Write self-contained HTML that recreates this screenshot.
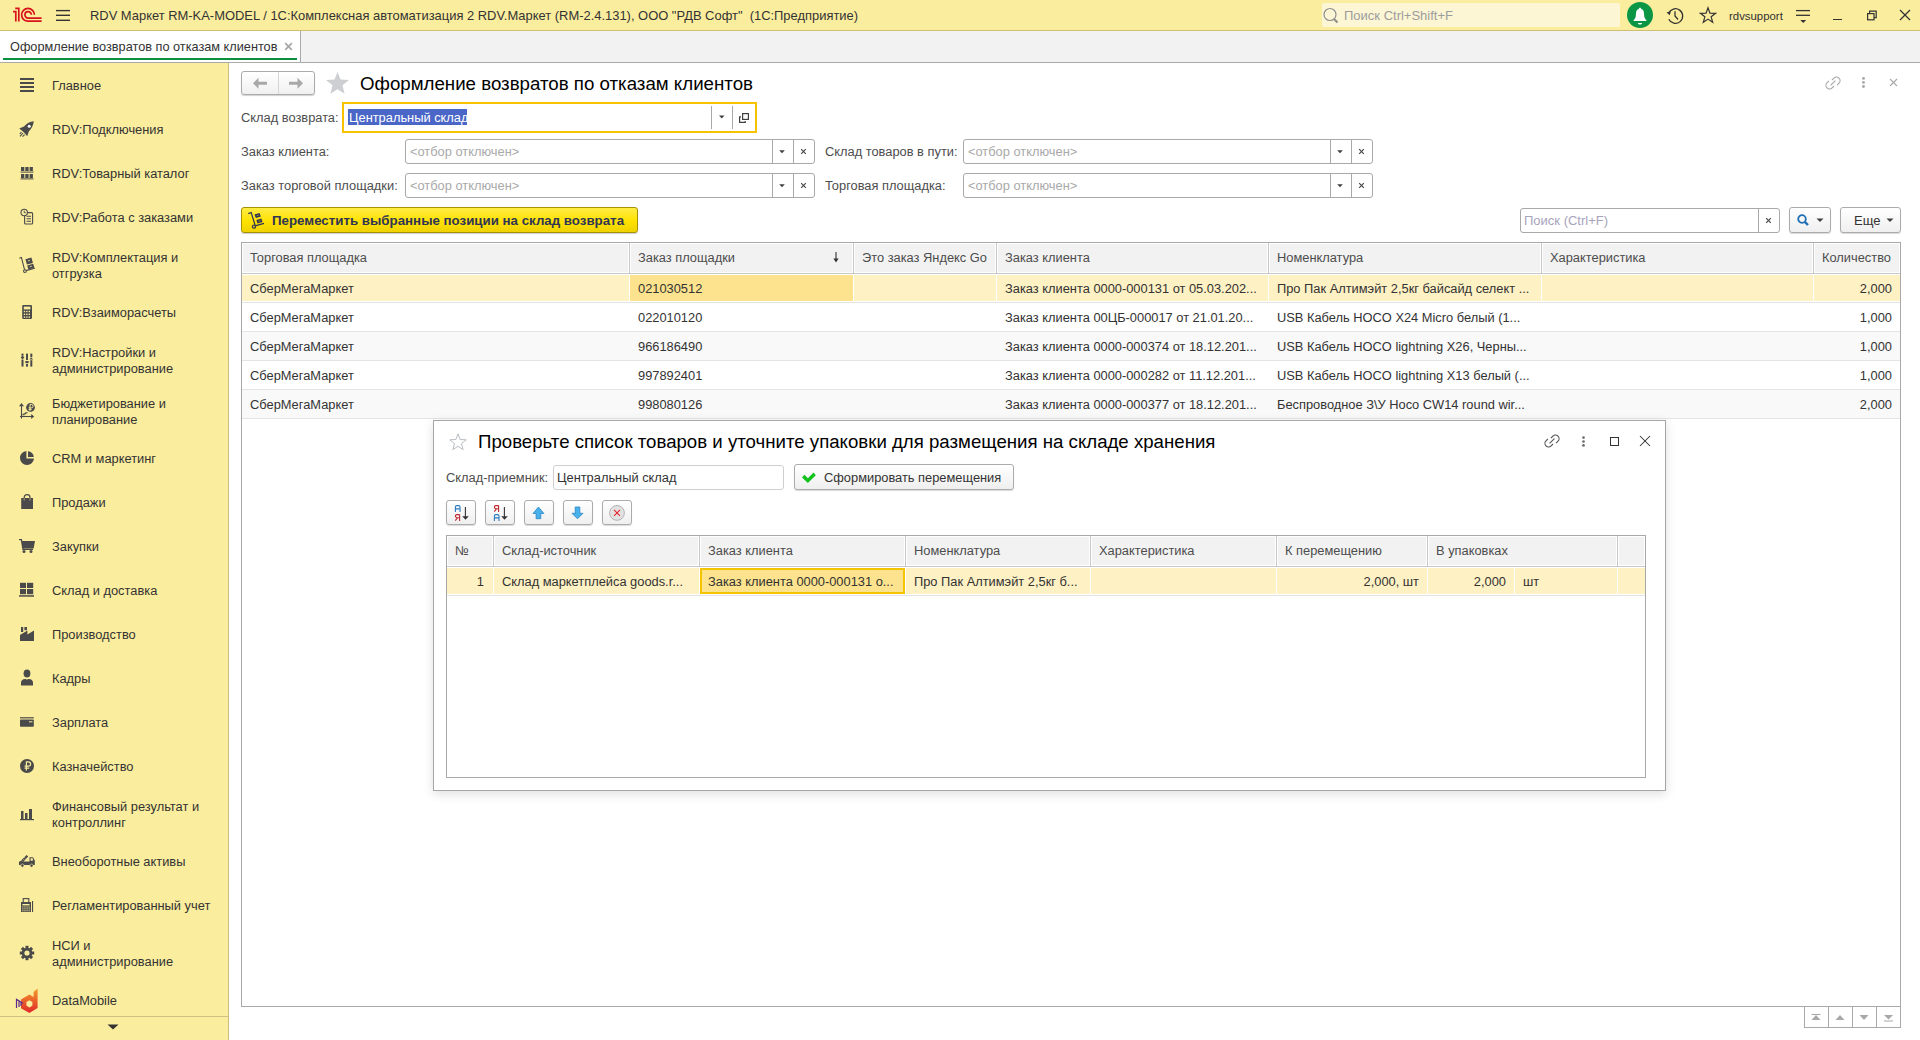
<!DOCTYPE html>
<html><head><meta charset="utf-8"><style>
html,body{margin:0;padding:0;width:1920px;height:1040px;overflow:hidden;background:#fff;position:relative}
.b{position:absolute;display:block}
.t{position:absolute;white-space:nowrap;line-height:16px;font-family:"Liberation Sans",sans-serif}
</style></head><body>
<div class="b" style="left:0px;top:0px;width:1920px;height:30px;background:#FBED9E"></div>
<div class="b" style="left:0px;top:30px;width:1920px;height:1px;background:#CFBF72"></div>
<svg class="b" style="left:8px;top:4px;" width="40" height="22" viewBox="0 0 40 22"><g fill="none" stroke="#D8121B" stroke-width="1.7"><path d="M7.2,4.4 H10.8 V17.6"/><path d="M5,7.6 H7.8 V17.6"/><path d="M26.4,10.8 A6.4,6.4 0 1 0 20,17.2 H33.6"/><path d="M23.4,10.85 A3.25,3.25 0 1 0 20.15,14.1 H33.6"/></g></svg>
<svg class="b" style="left:54px;top:6px;" width="18" height="18" viewBox="0 0 18 18"><g stroke="#333" stroke-width="1.4"><path d="M2,4.6 H16"/><path d="M2,9.3 H16"/><path d="M2,14.3 H16"/></g></svg>
<div class="t " style="left:90px;top:7.92px;font-size:12.93px;letter-spacing:0.00px;color:#333;font-weight:normal;">RDV Маркет RM-KA-MODEL / 1С:Комплексная автоматизация 2 RDV.Маркет (RM-2.4.131), ООО "РДВ Софт"&nbsp; (1С:Предприятие)</div>
<div class="b" style="left:1322px;top:3px;width:298px;height:24px;background:#FDF6D5;border-radius:2px"></div>
<svg class="b" style="left:1322px;top:6px;" width="18" height="18" viewBox="0 0 18 18"><g fill="none" stroke="#8F8F8F" stroke-width="1.2"><circle cx="8" cy="8.5" r="6"/></g><path d="M12,13 L15.5,16.5" stroke="#8F8F8F" stroke-width="2.2"/></svg>
<div class="t " style="left:1344px;top:7.90px;font-size:13px;letter-spacing:0.00px;color:#9C9C9C;font-weight:normal;">Поиск Ctrl+Shift+F</div>
<svg class="b" style="left:1627px;top:2px;" width="26" height="26" viewBox="0 0 26 26"><circle cx="13" cy="13" r="13" fill="#0B9646"/><path d="M13,5.8 c0.8,0 1,0.5 1,1 c2.2,0.6 2.9,2.6 3,4.6 l0.3,3.4 c0.3,1.4 1.5,2.6 2.3,4.2 H6.4 c0.8,-1.6 2,-2.8 2.3,-4.2 l0.3,-3.4 c0.1,-2 0.8,-4 3,-4.6 c0,-0.5 0.2,-1 1,-1z" fill="#fff"/><path d="M10.8,21 H15.2 c-0.4,1 -1.2,1.6 -2.2,1.6 c-1,0 -1.8,-0.6 -2.2,-1.6z" fill="#fff"/></svg>
<svg class="b" style="left:1664px;top:5px;" width="22" height="20" viewBox="0 0 22 20"><g fill="none" stroke="#333" stroke-width="1.3"><path d="M4.6,8.3 A7.3,7.3 0 1 1 4.8,14.2"/><path d="M11,6.3 V11 L14,14.5"/></g><path d="M2.5,7.5 L6.8,6.2 L5.8,10.3z" fill="#333"/></svg>
<svg class="b" style="left:1699px;top:6px;" width="18" height="18" viewBox="0 0 18 18"><path d="M9.00,1.80 L10.94,7.13 L16.61,7.33 L12.14,10.82 L13.70,16.27 L9.00,13.10 L4.30,16.27 L5.86,10.82 L1.39,7.33 L7.06,7.13z" fill="none" stroke="#333" stroke-width="1.2" stroke-linejoin="miter"/></svg>
<div class="t " style="left:1729px;top:8.45px;font-size:11.4px;letter-spacing:0.00px;color:#333;font-weight:normal;">rdvsupport</div>
<svg class="b" style="left:1794px;top:6px;" width="18" height="18" viewBox="0 0 18 18"><g stroke="#333" stroke-width="1.3"><path d="M2,4.6 H16"/><path d="M2,9.3 H16"/></g><path d="M6.3,14 H12.2 L9.2,17z" fill="#333"/></svg>
<div class="b" style="left:1833px;top:19px;width:9px;height:1.4px;background:#333"></div>
<svg class="b" style="left:1864px;top:8px;" width="14" height="14" viewBox="0 0 14 14"><g fill="none" stroke="#333" stroke-width="1.2"><rect x="3.6" y="5.6" width="6.4" height="6.2"/><path d="M5.6,5.6 V3.2 H12.2 V9.6 H10"/></g></svg>
<svg class="b" style="left:1898px;top:8px;" width="14" height="14" viewBox="0 0 14 14"><g stroke="#333" stroke-width="1.3"><path d="M2,2 L12,12"/><path d="M12,2 L2,12"/></g></svg>
<div class="b" style="left:0px;top:31px;width:1920px;height:31px;background:#F2F2F2"></div>
<div class="b" style="left:0px;top:31px;width:300px;height:31px;background:#fff"></div>
<div class="b" style="left:300px;top:31px;width:1px;height:31px;background:#A9A9A9"></div>
<div class="b" style="left:3px;top:58px;width:294px;height:2px;background:#0A8F3C"></div>
<div class="b" style="left:0px;top:62px;width:1920px;height:1px;background:#A9A9A9"></div>
<div class="t " style="left:10px;top:38.99px;font-size:12.72px;letter-spacing:0.00px;color:#333;font-weight:normal;">Оформление возвратов по отказам клиентов</div>
<svg class="b" style="left:283px;top:41px;" width="12" height="12" viewBox="0 0 12 12"><g stroke="#A6A6A6" stroke-width="1.7"><path d="M2.2,2.2 L8.8,8.8"/><path d="M8.8,2.2 L2.2,8.8"/></g></svg>
<div class="b" style="left:0px;top:63px;width:228px;height:977px;background:#FBED9E"></div>
<div class="b" style="left:228px;top:63px;width:1px;height:977px;background:#CBBE7C"></div>
<svg class="b" style="left:0;top:0" width="228" height="1040" viewBox="0 0 228 1040"><g fill="#4A4A4A"><rect x="20" y="78" width="14" height="2"/><rect x="20" y="82" width="14" height="2"/><rect x="20" y="86" width="14" height="2"/><rect x="20" y="90" width="14" height="2"/></g><path d="M33.8,121.2 C30,121.6 26.5,123.4 24,126.4 L19.2,128.4 L22.4,131 L24.2,132.8 L27.2,136.2 L28.8,131.4 C31.6,128.8 33.4,125 33.8,121.2Z" fill="#4A4A4A"/><circle cx="29.2" cy="126.3" r="1.5" fill="#fff"/><path d="M23,133 L20,136.3 M24.6,134.6 L22.6,136.6 M21.4,132.2 L19.8,134" stroke="#4A4A4A" stroke-width="1.1"/><g fill="#4A4A4A"><rect x="21" y="167" width="3.3" height="4"/><rect x="25.3" y="167" width="3.3" height="4"/><rect x="29.6" y="167" width="3.3" height="4"/><rect x="20.5" y="171.6" width="13" height="1"/><rect x="21" y="174" width="3.3" height="4"/><rect x="25.3" y="174" width="3.3" height="4"/><rect x="29.6" y="174" width="3.3" height="4"/><rect x="20.5" y="178.4" width="13" height="1"/></g><g fill="none" stroke="#4A4A4A" stroke-width="1.1"><rect x="24.6" y="212.6" width="8" height="11.4" rx="1"/><path d="M26.5,216.3 H31 M26.5,218.7 H31 M26.5,221.2 H31"/></g><circle cx="24.2" cy="212.5" r="3.2" fill="#FBED9E" stroke="#4A4A4A" stroke-width="1.1"/><path d="M24.2,210.6 V212.7 H25.8" fill="none" stroke="#4A4A4A" stroke-width="0.9"/><g fill="none" stroke="#4A4A4A" stroke-width="1.1"><path d="M19.4,258.2 L21.4,257.4 L24.6,269.8"/><path d="M25.8,270.6 L34.8,268.2"/><circle cx="24.9" cy="271.1" r="1.4"/></g><g fill="#4A4A4A"><path d="M25.4,259.2 L31.4,257.6 L32.9,263 L26.9,264.6Z"/><path d="M27.2,265.4 L33.2,263.8 L34.4,268 L28.4,269.6Z"/></g><g stroke="#FBED9E" stroke-width="0.8"><path d="M28,261 L30,260.4"/><path d="M29.8,266.8 L31.8,266.2"/></g><rect x="22.2" y="305" width="9.8" height="14" rx="1.2" fill="#4A4A4A"/><rect x="23.8" y="306.6" width="6.6" height="2.8" fill="#FBED9E"/><g fill="#FBED9E"><rect x="23.8" y="310.8" width="1.4" height="1.4"/><rect x="23.8" y="313.6" width="1.4" height="1.4"/><rect x="23.8" y="316.40000000000003" width="1.4" height="1.4"/><rect x="26.2" y="310.8" width="1.4" height="1.4"/><rect x="26.2" y="313.6" width="1.4" height="1.4"/><rect x="26.2" y="316.40000000000003" width="1.4" height="1.4"/><rect x="28.6" y="310.8" width="1.4" height="1.4"/><rect x="28.6" y="313.6" width="1.4" height="1.4"/><rect x="28.6" y="316.40000000000003" width="1.4" height="1.4"/></g><g fill="#4A4A4A"><rect x="21.5" y="353.6" width="2" height="2.2"/><path d="M22.5,355.6 L24.3,357.6 L22.5,359.6 L20.7,357.6Z"/><rect x="21.5" y="359.6" width="2" height="7"/><rect x="26" y="353.6" width="2" height="6.4"/><rect x="25.4" y="361" width="3.2" height="2.2"/><rect x="26" y="364" width="2" height="2.6"/><rect x="30.3" y="353.6" width="2" height="3.6"/><path d="M31.3,357.6 L33.2,359.4 L29.4,359.4Z"/><rect x="30.3" y="360.2" width="2" height="6.4"/></g><g fill="none" stroke="#4A4A4A" stroke-width="1.1"><path d="M21.5,405 V418.6"/><path d="M20,416.5 H32.4"/><path d="M22.2,414.8 L24,414.8 L24,413.8 L25.6,413.8 L25.6,412.8 L27.6,412.8"/></g><g fill="#4A4A4A"><path d="M21.5,403 L24,406.2 H19Z"/><path d="M34.2,416.5 L31.2,414 V419Z"/><circle cx="30.5" cy="407.5" r="4.4"/></g><path d="M30,411.3 V404.5 H31.4 A1.7,1.7 0 0 1 31.4,407.9 H28.6 M28.6,409.4 H31.6" fill="none" stroke="#FBED9E" stroke-width="1"/><path d="M26.4,451 A7,7 0 1 0 34,458.6 H26.4Z" fill="#4A4A4A"/><path d="M28,451.2 A6.2,6.2 0 0 1 33.8,457 H28Z" fill="#4A4A4A"/><rect x="21.2" y="498" width="11.8" height="11" fill="#4A4A4A"/><path d="M24.2,500.5 V497.5 A2.9,2.9 0 0 1 30,497.5 V500.5" fill="none" stroke="#4A4A4A" stroke-width="1.2"/><path d="M24.2,498.3 V500.5 M30,498.3 V500.5" stroke="#FBED9E" stroke-width="0.6"/><path d="M19,539.6 H21.4 L23,549.4 H33" fill="none" stroke="#4A4A4A" stroke-width="1.3"/><path d="M21.6,541 H35 L33.6,548.6 H22.8Z" fill="#4A4A4A"/><circle cx="24" cy="551.6" r="1.5" fill="#4A4A4A"/><circle cx="31" cy="551.6" r="1.5" fill="#4A4A4A"/><g fill="#4A4A4A"><rect x="20" y="582.8" width="6" height="5.2"/><rect x="27" y="582.8" width="6.2" height="5.2"/><rect x="20" y="589" width="6" height="5.2"/><rect x="27" y="589" width="6.2" height="5.2"/><rect x="19" y="595.2" width="15" height="1.5"/></g><g fill="#4A4A4A"><rect x="21" y="627" width="2.2" height="5"/><rect x="24.4" y="627" width="2.6" height="3.2"/><path d="M20,635 L27.4,630.6 V634.4 L34,630.6 V641 H20Z"/></g><path d="M21,685.6 V682.6 C21,680.4 22.8,679.2 25,679 H29 C31.2,679.2 33,680.4 33,682.6 V685.6Z" fill="#4A4A4A"/><ellipse cx="27" cy="673.6" rx="3.4" ry="4" fill="#4A4A4A"/><path d="M24.8,674 C25,676.6 26,677.6 27,677.6 C28,677.6 29,676.6 29.2,674 C28.4,673.2 27.4,672.2 27,671.8 C26.4,672.6 25.6,673.4 24.8,674Z" fill="#FBED9E" opacity="0.0"/><path d="M25.4,677.4 L27,679.6 L28.6,677.4" fill="none" stroke="#FBED9E" stroke-width="0.8"/><rect x="20" y="717.2" width="13.8" height="1.2" fill="#4A4A4A"/><rect x="20" y="719.4" width="13.8" height="7.4" rx="0.8" fill="#4A4A4A"/><rect x="29" y="721.3" width="3.4" height="1" fill="#FBED9E"/><circle cx="27" cy="766" r="7" fill="#4A4A4A"/><path d="M26.4,770.6 V761.8 H28.4 A2.2,2.2 0 0 1 28.4,766.2 H24.6 M24.6,768.2 H29.2" fill="none" stroke="#FBED9E" stroke-width="1.2"/><g fill="#4A4A4A"><rect x="21" y="811" width="2.5" height="8"/><rect x="25" y="813" width="2.5" height="6"/><rect x="29" y="809" width="3" height="10"/><rect x="20" y="819" width="14" height="1.2"/></g><path d="M19,865 V861.6 L20,861.6 L26.6,855 L28.2,856.6 L23.5,861.6 H29.5 V857.2 H33 L34.8,860.6 V865Z" fill="#4A4A4A"/><rect x="30.6" y="858.2" width="2.2" height="2.6" fill="#FBED9E"/><g stroke="#FBED9E" stroke-width="0.6"><path d="M21.4,860.2 L22.6,861.4 M22.9,858.7 L24.1,859.9 M24.4,857.2 L25.6,858.4"/></g><circle cx="22.4" cy="865.6" r="1.6" fill="#4A4A4A" stroke="#FBED9E" stroke-width="0.6"/><circle cx="31.5" cy="865.6" r="1.6" fill="#4A4A4A" stroke="#FBED9E" stroke-width="0.6"/><rect x="21" y="902" width="10" height="10" fill="#4A4A4A"/><rect x="23.2" y="898.6" width="5.6" height="4" fill="#FBED9E" stroke="#4A4A4A" stroke-width="1.1"/><rect x="32" y="901" width="1.1" height="11" fill="#4A4A4A"/><rect x="22.4" y="904" width="7.2" height="1.4" fill="#FBED9E"/><g fill="#FBED9E"><rect x="22.3" y="906.4" width="1.1" height="1.1"/><rect x="22.3" y="908.3" width="1.1" height="1.1"/><rect x="22.3" y="910.1999999999999" width="1.1" height="1.1"/><rect x="24.400000000000002" y="906.4" width="1.1" height="1.1"/><rect x="24.400000000000002" y="908.3" width="1.1" height="1.1"/><rect x="24.400000000000002" y="910.1999999999999" width="1.1" height="1.1"/><rect x="26.5" y="906.4" width="1.1" height="1.1"/><rect x="26.5" y="908.3" width="1.1" height="1.1"/><rect x="26.5" y="910.1999999999999" width="1.1" height="1.1"/><rect x="28.6" y="906.4" width="1.1" height="1.1"/><rect x="28.6" y="908.3" width="1.1" height="1.1"/><rect x="28.6" y="910.1999999999999" width="1.1" height="1.1"/></g><circle cx="27" cy="953" r="5.3" fill="#4A4A4A"/><rect x="25.5" y="945.8" width="3" height="3" fill="#4A4A4A" transform="rotate(0 27 953)"/><rect x="25.5" y="945.8" width="3" height="3" fill="#4A4A4A" transform="rotate(45 27 953)"/><rect x="25.5" y="945.8" width="3" height="3" fill="#4A4A4A" transform="rotate(90 27 953)"/><rect x="25.5" y="945.8" width="3" height="3" fill="#4A4A4A" transform="rotate(135 27 953)"/><rect x="25.5" y="945.8" width="3" height="3" fill="#4A4A4A" transform="rotate(180 27 953)"/><rect x="25.5" y="945.8" width="3" height="3" fill="#4A4A4A" transform="rotate(225 27 953)"/><rect x="25.5" y="945.8" width="3" height="3" fill="#4A4A4A" transform="rotate(270 27 953)"/><rect x="25.5" y="945.8" width="3" height="3" fill="#4A4A4A" transform="rotate(315 27 953)"/><circle cx="27" cy="953" r="2.6" fill="#FBED9E"/><defs><linearGradient id="dmg" x1="0" y1="0" x2="0" y2="1"><stop offset="0" stop-color="#F39A2A"/><stop offset="1" stop-color="#E0282A"/></linearGradient></defs><path d="M33.6,992 L37.6,988.6 V1008 L29.4,1013 L21,1008.2 V999.4 L29.4,994.6 L33.6,997Z M29.4,1000.2 L26.4,1002 V1005.6 L29.4,1007.4 L32.4,1005.6 V1002Z" fill="url(#dmg)" fill-rule="evenodd"/><path d="M16.5,1008 V999.4 L23,1003.2 M19,1001 V1007 M21,1002.2 V1006" fill="none" stroke="#5E2A8C" stroke-width="1.2"/></svg>
<div class="t " style="left:52px;top:77.95px;font-size:12.85px;letter-spacing:0.00px;color:#333;font-weight:normal;">Главное</div>
<div class="t " style="left:52px;top:121.95px;font-size:12.85px;letter-spacing:0.00px;color:#333;font-weight:normal;">RDV:Подключения</div>
<div class="t " style="left:52px;top:165.95px;font-size:12.85px;letter-spacing:0.00px;color:#333;font-weight:normal;">RDV:Товарный каталог</div>
<div class="t " style="left:52px;top:209.95px;font-size:12.85px;letter-spacing:0.00px;color:#333;font-weight:normal;">RDV:Работа с заказами</div>
<div class="t " style="left:52px;top:249.95px;font-size:12.85px;letter-spacing:0.00px;color:#333;font-weight:normal;">RDV:Комплектация и</div>
<div class="t " style="left:52px;top:265.95px;font-size:12.85px;letter-spacing:0.00px;color:#333;font-weight:normal;">отгрузка</div>
<div class="t " style="left:52px;top:304.95px;font-size:12.85px;letter-spacing:0.00px;color:#333;font-weight:normal;">RDV:Взаиморасчеты</div>
<div class="t " style="left:52px;top:344.95px;font-size:12.85px;letter-spacing:0.00px;color:#333;font-weight:normal;">RDV:Настройки и</div>
<div class="t " style="left:52px;top:360.95px;font-size:12.85px;letter-spacing:0.00px;color:#333;font-weight:normal;">администрирование</div>
<div class="t " style="left:52px;top:395.95px;font-size:12.85px;letter-spacing:0.00px;color:#333;font-weight:normal;">Бюджетирование и</div>
<div class="t " style="left:52px;top:411.95px;font-size:12.85px;letter-spacing:0.00px;color:#333;font-weight:normal;">планирование</div>
<div class="t " style="left:52px;top:450.95px;font-size:12.85px;letter-spacing:0.00px;color:#333;font-weight:normal;">CRM и маркетинг</div>
<div class="t " style="left:52px;top:494.95px;font-size:12.85px;letter-spacing:0.00px;color:#333;font-weight:normal;">Продажи</div>
<div class="t " style="left:52px;top:538.95px;font-size:12.85px;letter-spacing:0.00px;color:#333;font-weight:normal;">Закупки</div>
<div class="t " style="left:52px;top:582.95px;font-size:12.85px;letter-spacing:0.00px;color:#333;font-weight:normal;">Склад и доставка</div>
<div class="t " style="left:52px;top:626.95px;font-size:12.85px;letter-spacing:0.00px;color:#333;font-weight:normal;">Производство</div>
<div class="t " style="left:52px;top:670.95px;font-size:12.85px;letter-spacing:0.00px;color:#333;font-weight:normal;">Кадры</div>
<div class="t " style="left:52px;top:714.95px;font-size:12.85px;letter-spacing:0.00px;color:#333;font-weight:normal;">Зарплата</div>
<div class="t " style="left:52px;top:758.95px;font-size:12.85px;letter-spacing:0.00px;color:#333;font-weight:normal;">Казначейство</div>
<div class="t " style="left:52px;top:798.95px;font-size:12.85px;letter-spacing:0.00px;color:#333;font-weight:normal;">Финансовый результат и</div>
<div class="t " style="left:52px;top:814.95px;font-size:12.85px;letter-spacing:0.00px;color:#333;font-weight:normal;">контроллинг</div>
<div class="t " style="left:52px;top:853.95px;font-size:12.85px;letter-spacing:0.00px;color:#333;font-weight:normal;">Внеоборотные активы</div>
<div class="t " style="left:52px;top:897.95px;font-size:12.85px;letter-spacing:0.00px;color:#333;font-weight:normal;">Регламентированный учет</div>
<div class="t " style="left:52px;top:937.95px;font-size:12.85px;letter-spacing:0.00px;color:#333;font-weight:normal;">НСИ и</div>
<div class="t " style="left:52px;top:953.95px;font-size:12.85px;letter-spacing:0.00px;color:#333;font-weight:normal;">администрирование</div>
<div class="t " style="left:52px;top:992.95px;font-size:12.85px;letter-spacing:0.00px;color:#333;font-weight:normal;">DataMobile</div>
<div class="b" style="left:0px;top:1016px;width:228px;height:24px;background:#FBED9E"></div>
<div class="b" style="left:0px;top:1016px;width:228px;height:1px;background:#CFC183"></div>
<svg class="b" style="left:106px;top:1023px;" width="14" height="8" viewBox="0 0 14 8"><path d="M1.5,1.5 H12.5 L7,6.5z" fill="#333"/></svg>
<div class="b" style="left:229px;top:63px;width:1691px;height:977px;background:#fff"></div>
<div class="b" style="left:241px;top:71px;width:74px;height:24px;border:1px solid #ABABAB;border-radius:3px;background:linear-gradient(#fff,#F0F0F0);box-shadow:0 1px 1px rgba(0,0,0,0.18);box-sizing:border-box"></div>
<div class="b" style="left:278px;top:72px;width:1px;height:22px;background:#D5D5D5"></div>
<svg class="b" style="left:251px;top:75px;" width="18" height="16" viewBox="0 0 18 16"><path d="M2,8.25 L7.5,2.8 V6.8 H16 V9.7 H7.5 V13.7Z" fill="#A8A8A8"/></svg>
<svg class="b" style="left:288px;top:75px;" width="18" height="16" viewBox="0 0 18 16"><path d="M15,8.25 L9.5,2.8 V6.8 H1 V9.7 H9.5 V13.7Z" fill="#A8A8A8"/></svg>
<svg class="b" style="left:325px;top:71px;" width="25" height="24" viewBox="0 0 25 24"><path d="M12.5,1 L15.5,8.6 L24,9 L17.5,14.3 L19.6,22.8 L12.5,18.2 L5.4,22.8 L7.5,14.3 L1,9 L9.5,8.6z" fill="#CDCFD2"/></svg>
<div class="t " style="left:360px;top:75.50px;font-size:18.7px;letter-spacing:0.00px;color:#000;font-weight:normal;">Оформление возвратов по отказам клиентов</div>
<svg class="b" style="left:1824px;top:74px;" width="18" height="18" viewBox="0 0 18 18"><g fill="none" stroke="#A8A8A8" stroke-width="1.15"><path d="M8,6 L9.9,4.1 A3.6,3.6 0 0 1 15,9.2 L13.1,11.1"/><path d="M10,12 L8.1,13.9 A3.6,3.6 0 0 1 3,8.8 L4.9,6.9"/><path d="M6.6,11.4 L11.4,6.6"/></g></svg>
<svg class="b" style="left:1858px;top:74px;" width="12" height="18" viewBox="0 0 12 18"><g fill="#A8A8A8"><circle cx="5.5" cy="4.4" r="1.45"/><circle cx="5.5" cy="8.4" r="1.45"/><circle cx="5.5" cy="12.5" r="1.45"/></g></svg>
<svg class="b" style="left:1886px;top:76px;" width="14" height="14" viewBox="0 0 14 14"><g stroke="#A8A8A8" stroke-width="1.1"><path d="M4,3 L11,10"/><path d="M11,3 L4,10"/></g></svg>
<div class="t " style="left:241px;top:109.95px;font-size:12.85px;letter-spacing:0.00px;color:#4D4D4D;font-weight:normal;">Склад возврата:</div>
<div class="b" style="left:342px;top:102px;width:415px;height:31px;border:2px solid #F7C300;box-sizing:border-box;background:#fff"></div>
<div class="b" style="left:348px;top:109px;width:119px;height:16px;background:#4A66C7"></div>
<div class="t " style="left:349px;top:109.95px;font-size:12.85px;letter-spacing:0.00px;color:#fff;font-weight:normal;">Центральный склад</div>
<div class="b" style="left:711px;top:106px;width:1px;height:23px;background:#A8A8A8"></div>
<div class="b" style="left:732px;top:106px;width:1px;height:23px;background:#A8A8A8"></div>
<svg class="b" style="left:717px;top:113px;" width="10" height="8" viewBox="0 0 10 8"><path d="M2,2.5 H7.5 L4.75,5.5z" fill="#404040"/></svg>
<svg class="b" style="left:737px;top:111px;" width="14" height="14" viewBox="0 0 14 14"><g fill="none" stroke="#404040" stroke-width="1.2"><rect x="5.6" y="2.6" width="5.8" height="5.8"/><path d="M4,5.8 H2.6 V11.4 H8.2 V10"/></g></svg>
<div class="t " style="left:241px;top:143.95px;font-size:12.85px;letter-spacing:0.00px;color:#4D4D4D;font-weight:normal;">Заказ клиента:</div>
<div class="b" style="left:405px;top:139px;width:410px;height:25px;border:1px solid #A9A9A9;border-radius:3px;box-sizing:border-box;background:#fff"></div>
<div class="b" style="left:772px;top:140px;width:1px;height:23px;background:#A9A9A9"></div>
<div class="b" style="left:793px;top:140px;width:1px;height:23px;background:#A9A9A9"></div>
<svg class="b" style="left:777px;top:148px;" width="10" height="8" viewBox="0 0 10 8"><path d="M2.2,2.2 H7.8 L5,5.2z" fill="#404040"/></svg>
<svg class="b" style="left:799px;top:147px;" width="10" height="10" viewBox="0 0 10 10"><g stroke="#454545" stroke-width="1.15"><path d="M2.2,2.2 L6.8,6.8"/><path d="M6.8,2.2 L2.2,6.8"/></g></svg>
<div class="t " style="left:410px;top:143.95px;font-size:12.85px;letter-spacing:0.00px;color:#A9A9A9;font-weight:normal;">&lt;отбор отключен&gt;</div>
<div class="t " style="left:825px;top:143.95px;font-size:12.85px;letter-spacing:0.00px;color:#4D4D4D;font-weight:normal;">Склад товаров в пути:</div>
<div class="b" style="left:963px;top:139px;width:410px;height:25px;border:1px solid #A9A9A9;border-radius:3px;box-sizing:border-box;background:#fff"></div>
<div class="b" style="left:1330px;top:140px;width:1px;height:23px;background:#A9A9A9"></div>
<div class="b" style="left:1351px;top:140px;width:1px;height:23px;background:#A9A9A9"></div>
<svg class="b" style="left:1335px;top:148px;" width="10" height="8" viewBox="0 0 10 8"><path d="M2.2,2.2 H7.8 L5,5.2z" fill="#404040"/></svg>
<svg class="b" style="left:1357px;top:147px;" width="10" height="10" viewBox="0 0 10 10"><g stroke="#454545" stroke-width="1.15"><path d="M2.2,2.2 L6.8,6.8"/><path d="M6.8,2.2 L2.2,6.8"/></g></svg>
<div class="t " style="left:968px;top:143.95px;font-size:12.85px;letter-spacing:0.00px;color:#A9A9A9;font-weight:normal;">&lt;отбор отключен&gt;</div>
<div class="t " style="left:241px;top:177.95px;font-size:12.85px;letter-spacing:0.00px;color:#4D4D4D;font-weight:normal;">Заказ торговой площадки:</div>
<div class="b" style="left:405px;top:173px;width:410px;height:25px;border:1px solid #A9A9A9;border-radius:3px;box-sizing:border-box;background:#fff"></div>
<div class="b" style="left:772px;top:174px;width:1px;height:23px;background:#A9A9A9"></div>
<div class="b" style="left:793px;top:174px;width:1px;height:23px;background:#A9A9A9"></div>
<svg class="b" style="left:777px;top:182px;" width="10" height="8" viewBox="0 0 10 8"><path d="M2.2,2.2 H7.8 L5,5.2z" fill="#404040"/></svg>
<svg class="b" style="left:799px;top:181px;" width="10" height="10" viewBox="0 0 10 10"><g stroke="#454545" stroke-width="1.15"><path d="M2.2,2.2 L6.8,6.8"/><path d="M6.8,2.2 L2.2,6.8"/></g></svg>
<div class="t " style="left:410px;top:177.95px;font-size:12.85px;letter-spacing:0.00px;color:#A9A9A9;font-weight:normal;">&lt;отбор отключен&gt;</div>
<div class="t " style="left:825px;top:177.95px;font-size:12.85px;letter-spacing:0.00px;color:#4D4D4D;font-weight:normal;">Торговая площадка:</div>
<div class="b" style="left:963px;top:173px;width:410px;height:25px;border:1px solid #A9A9A9;border-radius:3px;box-sizing:border-box;background:#fff"></div>
<div class="b" style="left:1330px;top:174px;width:1px;height:23px;background:#A9A9A9"></div>
<div class="b" style="left:1351px;top:174px;width:1px;height:23px;background:#A9A9A9"></div>
<svg class="b" style="left:1335px;top:182px;" width="10" height="8" viewBox="0 0 10 8"><path d="M2.2,2.2 H7.8 L5,5.2z" fill="#404040"/></svg>
<svg class="b" style="left:1357px;top:181px;" width="10" height="10" viewBox="0 0 10 10"><g stroke="#454545" stroke-width="1.15"><path d="M2.2,2.2 L6.8,6.8"/><path d="M6.8,2.2 L2.2,6.8"/></g></svg>
<div class="t " style="left:968px;top:177.95px;font-size:12.85px;letter-spacing:0.00px;color:#A9A9A9;font-weight:normal;">&lt;отбор отключен&gt;</div>
<div class="b" style="left:241px;top:207px;width:397px;height:26px;border:1px solid #A69200;border-radius:3px;box-sizing:border-box;background:linear-gradient(#FFEC45,#FFE200 55%,#EFD200);box-shadow:0 1px 1px rgba(0,0,0,0.2)"></div>
<svg class="b" style="left:244px;top:207px;" width="24" height="26" viewBox="0 0 24 26"><g fill="none" stroke="#2E3355" stroke-width="1.2"><path d="M4.3,6.6 L7.2,5.5 L11.3,19"/><path d="M12,18.6 L20,16.3"/><circle cx="10" cy="19.6" r="1.6"/></g><g fill="#2E3355"><path d="M10.5,7.5 L15.5,6 L16.8,9.6 L11.8,11.1Z"/><path d="M12.4,13 L17.4,11.5 L18.5,15 L13.5,16.5Z"/></g><g stroke="#FFE100" stroke-width="0.7"><path d="M12.8,8.8 L14.6,8.2"/><path d="M14.6,14.3 L16.4,13.7"/></g></svg>
<div class="t " style="left:272px;top:212.79px;font-size:13.3px;letter-spacing:0.00px;color:#303555;font-weight:bold;">Переместить выбранные позиции на склад возврата</div>
<div class="b" style="left:1520px;top:208px;width:260px;height:25px;border:1px solid #A9A9A9;border-radius:3px;box-sizing:border-box;background:#fff"></div>
<div class="b" style="left:1758px;top:209px;width:1px;height:23px;background:#A9A9A9"></div>
<div class="t " style="left:1524px;top:212.90px;font-size:13px;letter-spacing:0.00px;color:#A7A4BC;font-weight:normal;">Поиск (Ctrl+F)</div>
<svg class="b" style="left:1764px;top:216px;" width="10" height="10" viewBox="0 0 10 10"><g stroke="#454545" stroke-width="1.15"><path d="M2.2,2.2 L6.8,6.8"/><path d="M6.8,2.2 L2.2,6.8"/></g></svg>
<div class="b" style="left:1789px;top:207px;width:42px;height:26px;border:1px solid #ABABAB;border-radius:3px;box-sizing:border-box;background:linear-gradient(#fff,#EFEFEF);box-shadow:0 1px 1px rgba(0,0,0,0.15)"></div>
<svg class="b" style="left:1796px;top:213px;" width="16" height="14" viewBox="0 0 16 14"><circle cx="6" cy="6" r="3.8" fill="none" stroke="#1F6FB5" stroke-width="1.8"/><path d="M8.8,8.8 L12,12" stroke="#1F6FB5" stroke-width="2.4"/></svg>
<svg class="b" style="left:1816px;top:218px;" width="8" height="5" viewBox="0 0 8 5"><path d="M0.5,0.5 H7.5 L4,4z" fill="#404040"/></svg>
<div class="b" style="left:1840px;top:207px;width:61px;height:26px;border:1px solid #ABABAB;border-radius:3px;box-sizing:border-box;background:linear-gradient(#fff,#EFEFEF);box-shadow:0 1px 1px rgba(0,0,0,0.15)"></div>
<div class="t " style="left:1854px;top:212.90px;font-size:13px;letter-spacing:0.00px;color:#333;font-weight:normal;">Еще</div>
<svg class="b" style="left:1886px;top:218px;" width="8" height="5" viewBox="0 0 8 5"><path d="M0.5,0.5 H7.5 L4,4z" fill="#404040"/></svg>
<div class="b" style="left:241px;top:242px;width:1660px;height:765px;border:1px solid #A8A8A8;box-sizing:border-box;background:#fff"></div>
<div class="b" style="left:243px;top:244px;width:385px;height:28px;background:#F2F2F2"></div>
<div class="b" style="left:631px;top:244px;width:221px;height:28px;background:#F2F2F2"></div>
<div class="b" style="left:855px;top:244px;width:140px;height:28px;background:#F2F2F2"></div>
<div class="b" style="left:998px;top:244px;width:269px;height:28px;background:#F2F2F2"></div>
<div class="b" style="left:1270px;top:244px;width:270px;height:28px;background:#F2F2F2"></div>
<div class="b" style="left:1543px;top:244px;width:269px;height:28px;background:#F2F2F2"></div>
<div class="b" style="left:1815px;top:244px;width:84px;height:28px;background:#F2F2F2"></div>
<div class="b" style="left:629px;top:243px;width:1px;height:30px;background:#C8C8C8"></div>
<div class="b" style="left:853px;top:243px;width:1px;height:30px;background:#C8C8C8"></div>
<div class="b" style="left:996px;top:243px;width:1px;height:30px;background:#C8C8C8"></div>
<div class="b" style="left:1268px;top:243px;width:1px;height:30px;background:#C8C8C8"></div>
<div class="b" style="left:1541px;top:243px;width:1px;height:30px;background:#C8C8C8"></div>
<div class="b" style="left:1813px;top:243px;width:1px;height:30px;background:#C8C8C8"></div>
<div class="b" style="left:242px;top:273px;width:1658px;height:1px;background:#C8C8C8"></div>
<div class="t " style="left:250px;top:249.95px;font-size:12.85px;letter-spacing:0.00px;color:#4D4D4D;font-weight:normal;">Торговая площадка</div>
<div class="t " style="left:638px;top:249.95px;font-size:12.85px;letter-spacing:0.00px;color:#4D4D4D;font-weight:normal;">Заказ площадки</div>
<div class="t " style="left:862px;top:249.95px;font-size:12.85px;letter-spacing:0.00px;color:#4D4D4D;font-weight:normal;">Это заказ Яндекс Go</div>
<div class="t " style="left:1005px;top:249.95px;font-size:12.85px;letter-spacing:0.00px;color:#4D4D4D;font-weight:normal;">Заказ клиента</div>
<div class="t " style="left:1277px;top:249.95px;font-size:12.85px;letter-spacing:0.00px;color:#4D4D4D;font-weight:normal;">Номенклатура</div>
<div class="t " style="left:1550px;top:249.95px;font-size:12.85px;letter-spacing:0.00px;color:#4D4D4D;font-weight:normal;">Характеристика</div>
<div class="t " style="left:1822px;top:249.95px;font-size:12.85px;letter-spacing:0.00px;color:#4D4D4D;font-weight:normal;">Количество</div>
<svg class="b" style="left:831px;top:250px;" width="10" height="14" viewBox="0 0 10 14"><path d="M5,2 V10" stroke="#333" stroke-width="1.1"/><path d="M2.4,8.6 L5,12.4 L7.6,8.6Z" fill="#333"/></svg>
<div class="b" style="left:242px;top:275px;width:387px;height:26px;background:#FEF1C4"></div>
<div class="b" style="left:630px;top:275px;width:223px;height:26px;background:#FDE38D"></div>
<div class="b" style="left:854px;top:275px;width:142px;height:26px;background:#FEF1C4"></div>
<div class="b" style="left:997px;top:275px;width:271px;height:26px;background:#FEF1C4"></div>
<div class="b" style="left:1269px;top:275px;width:272px;height:26px;background:#FEF1C4"></div>
<div class="b" style="left:1542px;top:275px;width:271px;height:26px;background:#FEF1C4"></div>
<div class="b" style="left:1814px;top:275px;width:86px;height:26px;background:#FEF1C4"></div>
<div class="b" style="left:242px;top:302px;width:1658px;height:1px;background:#E4E4E4"></div>
<div class="t " style="left:250px;top:280.95px;font-size:12.85px;letter-spacing:0.00px;color:#333;font-weight:normal;">СберМегаМаркет</div>
<div class="t " style="left:638px;top:280.95px;font-size:12.85px;letter-spacing:0.00px;color:#333;font-weight:normal;">021030512</div>
<div class="t " style="left:1005px;top:280.95px;font-size:12.85px;letter-spacing:0.00px;color:#333;font-weight:normal;">Заказ клиента 0000-000131 от 05.03.202...</div>
<div class="t " style="left:1277px;top:280.95px;font-size:12.85px;letter-spacing:0.00px;color:#333;font-weight:normal;">Про Пак Алтимэйт 2,5кг байсайд селект ...</div>
<div class="t" style="right:28.00px;top:280.95px;font-size:12.85px;letter-spacing:0.00px;color:#333;font-weight:normal;text-align:right;">2,000</div>
<div class="b" style="left:242px;top:331px;width:1658px;height:1px;background:#E4E4E4"></div>
<div class="t " style="left:250px;top:309.95px;font-size:12.85px;letter-spacing:0.00px;color:#333;font-weight:normal;">СберМегаМаркет</div>
<div class="t " style="left:638px;top:309.95px;font-size:12.85px;letter-spacing:0.00px;color:#333;font-weight:normal;">022010120</div>
<div class="t " style="left:1005px;top:309.95px;font-size:12.85px;letter-spacing:0.00px;color:#333;font-weight:normal;">Заказ клиента 00ЦБ-000017 от 21.01.20...</div>
<div class="t " style="left:1277px;top:309.95px;font-size:12.85px;letter-spacing:0.00px;color:#333;font-weight:normal;">USB Кабель HOCO X24 Micro белый (1...</div>
<div class="t" style="right:28.00px;top:309.95px;font-size:12.85px;letter-spacing:0.00px;color:#333;font-weight:normal;text-align:right;">1,000</div>
<div class="b" style="left:242px;top:332px;width:1658px;height:28px;background:#F9F9F9"></div>
<div class="b" style="left:242px;top:360px;width:1658px;height:1px;background:#E4E4E4"></div>
<div class="t " style="left:250px;top:338.95px;font-size:12.85px;letter-spacing:0.00px;color:#333;font-weight:normal;">СберМегаМаркет</div>
<div class="t " style="left:638px;top:338.95px;font-size:12.85px;letter-spacing:0.00px;color:#333;font-weight:normal;">966186490</div>
<div class="t " style="left:1005px;top:338.95px;font-size:12.85px;letter-spacing:0.00px;color:#333;font-weight:normal;">Заказ клиента 0000-000374 от 18.12.201...</div>
<div class="t " style="left:1277px;top:338.95px;font-size:12.85px;letter-spacing:0.00px;color:#333;font-weight:normal;">USB Кабель HOCO lightning X26, Черны...</div>
<div class="t" style="right:28.00px;top:338.95px;font-size:12.85px;letter-spacing:0.00px;color:#333;font-weight:normal;text-align:right;">1,000</div>
<div class="b" style="left:242px;top:389px;width:1658px;height:1px;background:#E4E4E4"></div>
<div class="t " style="left:250px;top:367.95px;font-size:12.85px;letter-spacing:0.00px;color:#333;font-weight:normal;">СберМегаМаркет</div>
<div class="t " style="left:638px;top:367.95px;font-size:12.85px;letter-spacing:0.00px;color:#333;font-weight:normal;">997892401</div>
<div class="t " style="left:1005px;top:367.95px;font-size:12.85px;letter-spacing:0.00px;color:#333;font-weight:normal;">Заказ клиента 0000-000282 от 11.12.201...</div>
<div class="t " style="left:1277px;top:367.95px;font-size:12.85px;letter-spacing:0.00px;color:#333;font-weight:normal;">USB Кабель HOCO lightning X13 белый (...</div>
<div class="t" style="right:28.00px;top:367.95px;font-size:12.85px;letter-spacing:0.00px;color:#333;font-weight:normal;text-align:right;">1,000</div>
<div class="b" style="left:242px;top:390px;width:1658px;height:28px;background:#F9F9F9"></div>
<div class="b" style="left:242px;top:418px;width:1658px;height:1px;background:#E4E4E4"></div>
<div class="t " style="left:250px;top:396.95px;font-size:12.85px;letter-spacing:0.00px;color:#333;font-weight:normal;">СберМегаМаркет</div>
<div class="t " style="left:638px;top:396.95px;font-size:12.85px;letter-spacing:0.00px;color:#333;font-weight:normal;">998080126</div>
<div class="t " style="left:1005px;top:396.95px;font-size:12.85px;letter-spacing:0.00px;color:#333;font-weight:normal;">Заказ клиента 0000-000377 от 18.12.201...</div>
<div class="t " style="left:1277px;top:396.95px;font-size:12.85px;letter-spacing:0.00px;color:#333;font-weight:normal;">Беспроводное З\У Hoco CW14 round wir...</div>
<div class="t" style="right:28.00px;top:396.95px;font-size:12.85px;letter-spacing:0.00px;color:#333;font-weight:normal;text-align:right;">2,000</div>
<div class="b" style="left:1804px;top:1006px;width:97px;height:22px;border:1px solid #A9A9A9;box-sizing:border-box;background:#fff"></div>
<div class="b" style="left:1828px;top:1006px;width:1px;height:22px;background:#A9A9A9"></div>
<div class="b" style="left:1852px;top:1006px;width:1px;height:22px;background:#A9A9A9"></div>
<div class="b" style="left:1876px;top:1006px;width:1px;height:22px;background:#A9A9A9"></div>
<svg class="b" style="left:1804px;top:1006px;" width="97" height="22" viewBox="0 0 97 22"><g fill="#A8A8A8"><rect x="7.5" y="8" width="9" height="1"/><path d="M7.5,14 L12,9 L16.5,14z"/><path d="M31.5,14 L36,9 L40.5,14z"/><path d="M55.5,9 H64.5 L60,14z"/><path d="M80,9 H89 L84.5,13.5z"/><rect x="80" y="14.5" width="9" height="1"/></g></svg>
<div class="b" style="left:433px;top:420px;width:1233px;height:371px;border:1px solid #A6A6A6;box-sizing:border-box;background:#fff;box-shadow:0 3px 10px rgba(0,0,0,0.13)"></div>
<svg class="b" style="left:448px;top:432px;" width="20" height="20" viewBox="0 0 20 20"><path d="M10,1.8 L12.1,7.5 L18.2,7.8 L13.5,11.6 L15.1,17.6 L10,14.3 L4.9,17.6 L6.5,11.6 L1.8,7.8 L7.9,7.5z" fill="none" stroke="#B8BCC2" stroke-width="1"/></svg>
<div class="t " style="left:478px;top:433.50px;font-size:18.65px;letter-spacing:0.00px;color:#000;font-weight:normal;">Проверьте список товаров и уточните упаковки для размещения на складе хранения</div>
<svg class="b" style="left:1543px;top:432px;" width="18" height="18" viewBox="0 0 18 18"><g fill="none" stroke="#555" stroke-width="1.15"><path d="M8,6 L9.9,4.1 A3.6,3.6 0 0 1 15,9.2 L13.1,11.1"/><path d="M10,12 L8.1,13.9 A3.6,3.6 0 0 1 3,8.8 L4.9,6.9"/><path d="M6.6,11.4 L11.4,6.6"/></g></svg>
<svg class="b" style="left:1578px;top:432px;" width="12" height="18" viewBox="0 0 12 18"><g fill="#6E6E6E"><circle cx="5.5" cy="5.6" r="1.35"/><circle cx="5.5" cy="9.5" r="1.35"/><circle cx="5.5" cy="13.4" r="1.35"/></g></svg>
<div class="b" style="left:1610px;top:437px;width:9px;height:9px;border:1.4px solid #333;box-sizing:border-box"></div>
<svg class="b" style="left:1638px;top:434px;" width="14" height="14" viewBox="0 0 14 14"><g stroke="#333" stroke-width="1.05"><path d="M2,2 L12,12"/><path d="M12,2 L2,12"/></g></svg>
<div class="t " style="left:446px;top:469.95px;font-size:12.85px;letter-spacing:0.00px;color:#4D4D4D;font-weight:normal;">Склад-приемник:</div>
<div class="b" style="left:553px;top:465px;width:231px;height:25px;border:1px solid #CFCFCF;border-radius:3px;box-sizing:border-box;background:#fff"></div>
<div class="t " style="left:557px;top:469.95px;font-size:12.85px;letter-spacing:0.00px;color:#333;font-weight:normal;">Центральный склад</div>
<div class="b" style="left:794px;top:464px;width:220px;height:26px;border:1px solid #ABABAB;border-radius:3px;box-sizing:border-box;background:linear-gradient(#fff,#EFEFEF);box-shadow:0 1px 1px rgba(0,0,0,0.15)"></div>
<svg class="b" style="left:801px;top:469px;" width="18" height="16" viewBox="0 0 18 16"><path d="M1,8.5 L3.5,5.8 L6.9,9.3 L12.6,3.6 L14.8,6.2 L6.9,14Z" fill="#12C21C"/></svg>
<div class="t " style="left:824px;top:469.95px;font-size:12.85px;letter-spacing:0.00px;color:#333;font-weight:normal;">Сформировать перемещения</div>
<div class="b" style="left:446px;top:500px;width:30px;height:25px;border:1px solid #ABABAB;border-radius:3px;box-sizing:border-box;background:linear-gradient(#fff,#EFEFEF);box-shadow:0 1px 1px rgba(0,0,0,0.15)"></div>
<div class="b" style="left:485px;top:500px;width:30px;height:25px;border:1px solid #ABABAB;border-radius:3px;box-sizing:border-box;background:linear-gradient(#fff,#EFEFEF);box-shadow:0 1px 1px rgba(0,0,0,0.15)"></div>
<div class="b" style="left:524px;top:500px;width:30px;height:25px;border:1px solid #ABABAB;border-radius:3px;box-sizing:border-box;background:linear-gradient(#fff,#EFEFEF);box-shadow:0 1px 1px rgba(0,0,0,0.15)"></div>
<div class="b" style="left:563px;top:500px;width:30px;height:25px;border:1px solid #ABABAB;border-radius:3px;box-sizing:border-box;background:linear-gradient(#fff,#EFEFEF);box-shadow:0 1px 1px rgba(0,0,0,0.15)"></div>
<div class="b" style="left:602px;top:500px;width:30px;height:25px;border:1px solid #ABABAB;border-radius:3px;box-sizing:border-box;background:linear-gradient(#fff,#EFEFEF);box-shadow:0 1px 1px rgba(0,0,0,0.15)"></div>
<svg class="b" style="left:446px;top:500px;" width="30" height="25" viewBox="0 0 30 25"><path d="M9.4,12 V7 Q9.4,5.6 10.8,5.6 H12.6 Q14,5.6 14,7 V12 M9.4,8.9 H14" fill="none" stroke="#2B7BC0" stroke-width="1.1"/><path d="M13.6,14.4 V21 M13.6,17.7 H10.8 Q9.4,17.7 9.4,16.1 Q9.4,14.6 10.8,14.6 H13.6 M11.6,17.7 L9.3,20.6" fill="none" stroke="#C0282D" stroke-width="1.1"/><path d="M19.4,7 V17" stroke="#333" stroke-width="1.1"/><path d="M16.2,16.2 H22.8 L19.5,19.8Z" fill="#333"/></svg>
<svg class="b" style="left:485px;top:500px;" width="30" height="25" viewBox="0 0 30 25"><path d="M13.6,5.4 V12 M13.6,8.7 H10.8 Q9.4,8.7 9.4,7.1 Q9.4,5.6 10.8,5.6 H13.6 M11.6,8.7 L9.3,11.6" fill="none" stroke="#C0282D" stroke-width="1.1"/><path d="M9.4,21 V16 Q9.4,14.6 10.8,14.6 H12.6 Q14,14.6 14,16 V21 M9.4,17.9 H14" fill="none" stroke="#2B7BC0" stroke-width="1.1"/><path d="M19.4,7 V17" stroke="#333" stroke-width="1.1"/><path d="M16.2,16.2 H22.8 L19.5,19.8Z" fill="#333"/></svg>
<svg class="b" style="left:524px;top:500px;" width="30" height="25" viewBox="0 0 30 25"><path d="M14.45,7 L19.9,13.5 H16.8 V18.7 H12.1 V13.5 H9Z" fill="#48B0EA" stroke="#2A86C2" stroke-width="0.8" stroke-linejoin="round"/></svg>
<svg class="b" style="left:563px;top:500px;" width="30" height="25" viewBox="0 0 30 25"><path d="M14.5,18.8 L20,13.3 H16.8 V7 H12.2 V13.3 H9Z" fill="#48B0EA" stroke="#2A86C2" stroke-width="0.8" stroke-linejoin="round"/></svg>
<svg class="b" style="left:602px;top:500px;" width="30" height="25" viewBox="0 0 30 25"><circle cx="15" cy="12.9" r="7.4" fill="#E2E2E2" stroke="#ADADAD" stroke-width="0.9"/><g stroke="#E8202A" stroke-width="1.1"><path d="M12,9.9 L18,15.9"/><path d="M18,9.9 L12,15.9"/></g></svg>
<div class="b" style="left:446px;top:535px;width:1200px;height:243px;border:1px solid #A8A8A8;box-sizing:border-box;background:#fff"></div>
<div class="b" style="left:448px;top:537px;width:44px;height:28px;background:#F2F2F2"></div>
<div class="b" style="left:495px;top:537px;width:203px;height:28px;background:#F2F2F2"></div>
<div class="b" style="left:701px;top:537px;width:203px;height:28px;background:#F2F2F2"></div>
<div class="b" style="left:907px;top:537px;width:182px;height:28px;background:#F2F2F2"></div>
<div class="b" style="left:1092px;top:537px;width:183px;height:28px;background:#F2F2F2"></div>
<div class="b" style="left:1278px;top:537px;width:148px;height:28px;background:#F2F2F2"></div>
<div class="b" style="left:1429px;top:537px;width:187px;height:28px;background:#F2F2F2"></div>
<div class="b" style="left:1619px;top:537px;width:25px;height:28px;background:#F2F2F2"></div>
<div class="b" style="left:493px;top:536px;width:1px;height:30px;background:#C8C8C8"></div>
<div class="b" style="left:699px;top:536px;width:1px;height:30px;background:#C8C8C8"></div>
<div class="b" style="left:905px;top:536px;width:1px;height:30px;background:#C8C8C8"></div>
<div class="b" style="left:1090px;top:536px;width:1px;height:30px;background:#C8C8C8"></div>
<div class="b" style="left:1276px;top:536px;width:1px;height:30px;background:#C8C8C8"></div>
<div class="b" style="left:1427px;top:536px;width:1px;height:30px;background:#C8C8C8"></div>
<div class="b" style="left:1617px;top:536px;width:1px;height:30px;background:#C8C8C8"></div>
<div class="b" style="left:447px;top:566px;width:1198px;height:1px;background:#C8C8C8"></div>
<div class="t " style="left:455px;top:542.95px;font-size:12.85px;letter-spacing:0.00px;color:#4D4D4D;font-weight:normal;">№</div>
<div class="t " style="left:502px;top:542.95px;font-size:12.85px;letter-spacing:0.00px;color:#4D4D4D;font-weight:normal;">Склад-источник</div>
<div class="t " style="left:708px;top:542.95px;font-size:12.85px;letter-spacing:0.00px;color:#4D4D4D;font-weight:normal;">Заказ клиента</div>
<div class="t " style="left:914px;top:542.95px;font-size:12.85px;letter-spacing:0.00px;color:#4D4D4D;font-weight:normal;">Номенклатура</div>
<div class="t " style="left:1099px;top:542.95px;font-size:12.85px;letter-spacing:0.00px;color:#4D4D4D;font-weight:normal;">Характеристика</div>
<div class="t " style="left:1285px;top:542.95px;font-size:12.85px;letter-spacing:0.00px;color:#4D4D4D;font-weight:normal;">К перемещению</div>
<div class="t " style="left:1436px;top:542.95px;font-size:12.85px;letter-spacing:0.00px;color:#4D4D4D;font-weight:normal;">В упаковках</div>
<div class="b" style="left:447px;top:568px;width:46px;height:26px;background:#FEF1C4"></div>
<div class="b" style="left:494px;top:568px;width:205px;height:26px;background:#FEF1C4"></div>
<div class="b" style="left:700px;top:568px;width:205px;height:26px;background:#FEF1C4"></div>
<div class="b" style="left:906px;top:568px;width:184px;height:26px;background:#FEF1C4"></div>
<div class="b" style="left:1091px;top:568px;width:185px;height:26px;background:#FEF1C4"></div>
<div class="b" style="left:1277px;top:568px;width:150px;height:26px;background:#FEF1C4"></div>
<div class="b" style="left:1428px;top:568px;width:86px;height:26px;background:#FEF1C4"></div>
<div class="b" style="left:1515px;top:568px;width:102px;height:26px;background:#FEF1C4"></div>
<div class="b" style="left:1618px;top:568px;width:27px;height:26px;background:#FEF1C4"></div>
<div class="b" style="left:700px;top:568px;width:205px;height:26px;background:#FDE38D;border:2px solid #F5C400;box-sizing:border-box"></div>
<div class="b" style="left:447px;top:595px;width:1198px;height:1px;background:#E4E4E4"></div>
<div class="t" style="right:1436.00px;top:573.95px;font-size:12.85px;letter-spacing:0.00px;color:#333;font-weight:normal;text-align:right;">1</div>
<div class="t " style="left:502px;top:573.95px;font-size:12.85px;letter-spacing:0.00px;color:#333;font-weight:normal;">Склад маркетплейса goods.r...</div>
<div class="t " style="left:708px;top:573.95px;font-size:12.85px;letter-spacing:0.00px;color:#333;font-weight:normal;">Заказ клиента 0000-000131 о...</div>
<div class="t " style="left:914px;top:573.95px;font-size:12.85px;letter-spacing:0.00px;color:#333;font-weight:normal;">Про Пак Алтимэйт 2,5кг б...</div>
<div class="t" style="right:501.00px;top:573.95px;font-size:12.85px;letter-spacing:0.00px;color:#333;font-weight:normal;text-align:right;">2,000, шт</div>
<div class="t" style="right:414.00px;top:573.95px;font-size:12.85px;letter-spacing:0.00px;color:#333;font-weight:normal;text-align:right;">2,000</div>
<div class="t " style="left:1523px;top:573.95px;font-size:12.85px;letter-spacing:0.00px;color:#333;font-weight:normal;">шт</div>
</body></html>
